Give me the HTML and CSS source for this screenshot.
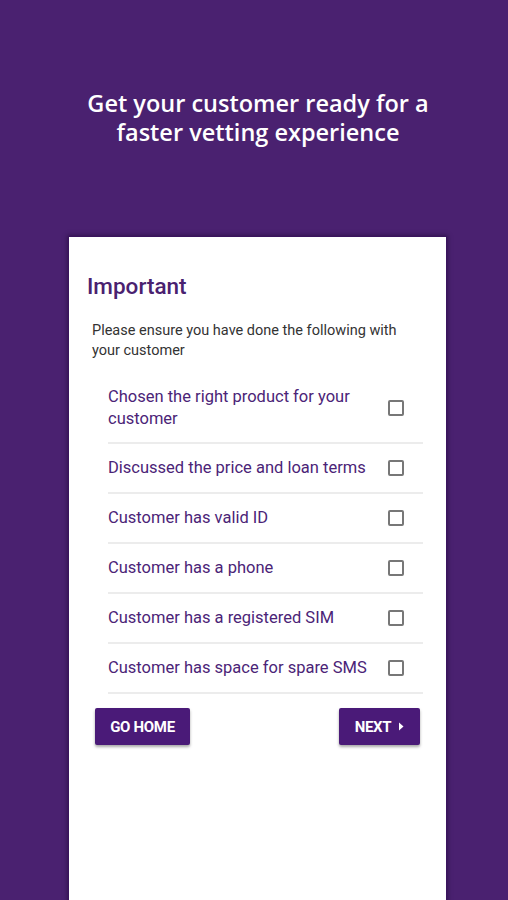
FILE: index.html
```html
<!DOCTYPE html>
<html>
<head>
<meta charset="utf-8">
<link rel="stylesheet" href="styles.css">
</head>
<body>
<div class="page">
  <h1 class="headline"><span class="line">Get your customer ready for a</span><span class="line">faster vetting experience</span></h1>
  <div class="card">
    <h2 class="card-title">Important</h2>
    <p class="intro">Please ensure you have done the following with your customer</p>
    <ul class="checklist">
      <li class="item item-tall"><span class="label">Chosen the right product for your customer</span><span class="box"></span></li>
      <li class="item"><span class="label">Discussed the price and loan terms</span><span class="box"></span></li>
      <li class="item"><span class="label">Customer has valid ID</span><span class="box"></span></li>
      <li class="item"><span class="label">Customer has a phone</span><span class="box"></span></li>
      <li class="item"><span class="label">Customer has a registered SIM</span><span class="box"></span></li>
      <li class="item"><span class="label">Customer has space for spare SMS</span><span class="box"></span></li>
    </ul>
    <div class="actions">
      <button class="btn btn-home">GO HOME</button>
      <button class="btn btn-next">NEXT <svg class="arrow" width="6" height="9" viewBox="0 0 6 9"><path d="M1 0.5 L5.5 4.5 L1 8.5 Z" fill="#fff"/></svg></button>
    </div>
  </div>
</div>
</body>
</html>
```
FILE: styles.css
```css
* { box-sizing: border-box; }
html, body { margin: 0; padding: 0; }
body {
  background: #4a2170;
  font-family: Roboto, "Liberation Sans", sans-serif;
  height: 900px;
  overflow: hidden;
}
.page {
  padding-top: 89px;
}
.headline {
  margin: 0;
  padding-left: 8px;
  color: #ffffff;
  text-align: center;
  font-family: "Open Sans", "Liberation Sans", sans-serif;
  font-weight: 600;
  font-size: 23.5px;
  line-height: 29px;
  letter-spacing: 0;
}
.line {
  display: block;
  height: 29px;
}
.card {
  margin: 90px 0 0 69px;
  width: 377px;
  height: 700px;
  background: #ffffff;
  box-shadow: 0 0 0 1px #3a145e, 0 0 4px 2px rgba(30, 5, 50, 0.5);
  padding: 35px 23px 0 18px;
}
.card-title {
  margin: 0;
  color: #4a2170;
  font-size: 22.5px;
  font-weight: 500;
  line-height: 28px;
}
.intro {
  margin: 21px 0 0 5px;
  font-size: 14.5px;
  line-height: 20px;
  color: #333333;
  padding-right: 10px;
}
.checklist {
  list-style: none;
  margin: 15px 0 0 21px;
  padding: 0;
}
.item {
  display: flex;
  align-items: center;
  justify-content: space-between;
  height: 50px;
  border-bottom: 2px solid #ececec;
  color: #4b2477;
  font-size: 16.5px;
  line-height: 22px;
}
.item-tall {
  height: 68px;
  padding-bottom: 2px;
}
.label {
  max-width: 270px;
}
.box {
  flex: none;
  width: 16px;
  height: 16px;
  border: 2px solid #777777;
  border-radius: 2px;
  margin-right: 19px;
}
.actions {
  display: flex;
  justify-content: space-between;
  margin: 14px 3px 0 8px;
}
.btn {
  height: 37px;
  border: none;
  background: #4a1a78;
  color: #ffffff;
  font-family: Roboto, "Liberation Sans", sans-serif;
  font-weight: 700;
  font-size: 15px;
  letter-spacing: -0.3px;
  border-radius: 2px;
  box-shadow: 0 2px 3px rgba(0, 0, 0, 0.35);
  display: flex;
  align-items: center;
  justify-content: center;
}
.btn-home { width: 95px; }
.btn-next { width: 81px; gap: 7px; }
.arrow { display: block; }
```
